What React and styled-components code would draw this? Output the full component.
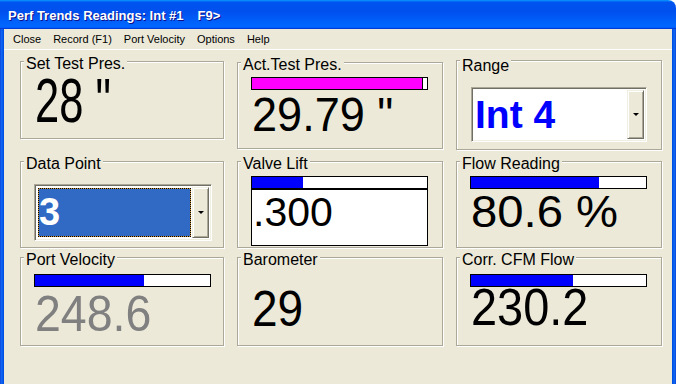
import React from 'react'
import styled, { createGlobalStyle } from 'styled-components'

const GlobalStyle = createGlobalStyle`
  html, body {
    margin: 0;
    padding: 0;
    background: #fff;
  }
  body {
    font-family: "Liberation Sans", Arial, sans-serif;
  }
`

const Window = styled.div`
  width: 676px;
  height: 384px;
  display: flex;
  flex-direction: column;
  overflow: hidden;
`

const TitleBar = styled.div`
  flex: none;
  height: 29px;
  box-sizing: border-box;
  display: flex;
  align-items: center;
  padding: 2px 0 0 8px;
  border-top-right-radius: 8px;
  background: linear-gradient(to bottom, #0997ff, #0053ee 8%, #0050ee 40%, #0066ff 88%, #0066ff 93%, #005bff 95%, #003dd7 96%, #003dd7);
  color: #fff;
  font: bold 13px "Liberation Sans", Arial, sans-serif;
  text-shadow: 1px 1px #0f1089;
  white-space: pre;
`

const TitleKey = styled.span`
  margin-left: 14px;
`

const Frame = styled.div`
  flex: 1;
  display: flex;
  padding: 0 4px;
  background: linear-gradient(to right, #0831d9 0, #166aee 1px, #0058ee 3px, #0046d8 4px, transparent 4px, transparent calc(100% - 4px), #0046d8 calc(100% - 4px), #0058ee calc(100% - 3px), #166aee calc(100% - 1px), #0831d9 100%);
`

const Client = styled.div`
  flex: 1;
  display: flex;
  flex-direction: column;
  background: #ece9d8;
`

const MenuBar = styled.div`
  flex: none;
  height: 20px;
  display: flex;
  align-items: center;
  padding-left: 3px;
  border-bottom: 1px solid #fff;
  font: 11px "Liberation Sans", Arial, sans-serif;
  color: #000;
`

const MenuItem = styled.span`
  padding: 0 6px;
`

const Panels = styled.div`
  display: grid;
  grid-template-columns: 204px 206px 206px;
  grid-template-rows: 101px 96px auto;
  column-gap: 13px;
  align-items: start;
  padding: 10px 0 0 16px;
`

const Group = styled.div`
  box-sizing: border-box;
  height: ${p => p.$h}px;
  margin-top: ${p => p.$top || 0}px;
  display: flex;
  flex-direction: column;
  align-items: flex-start;
  padding: 0 13px;
  border: 1px solid #aca899;
  box-shadow: inset 1px 1px #fff, 1px 1px #fff;
`

const Legend = styled.div`
  margin: ${p => p.$offset || -7}px 0 0 -10px;
  padding: 0 2px;
  background: #ece9d8;
  font-size: 16px;
  line-height: 18px;
  color: #000;
  white-space: nowrap;
`

const Bar = styled.div`
  flex: none;
  box-sizing: border-box;
  width: 177px;
  height: 13px;
  margin-top: ${p => p.$mt}px;
  border: 1px solid #000;
  background: #fff;
`

const Fill = styled.div`
  height: 100%;
  width: ${p => p.$pct}%;
  background: ${p => p.$color || '#0000ff'};
  border-right: ${p => (p.$edge ? '1px solid #000' : 'none')};
`

const Value = styled.div`
  margin: ${p => p.$mt}px 0 0 1px;
  font-size: ${p => p.$size}px;
  line-height: 0.8;
  color: ${p => p.$color || '#000'};
  white-space: pre;
  transform: scaleX(${p => p.$sx});
  transform-origin: left top;
`

const TextBox = styled.div`
  box-sizing: border-box;
  width: 177px;
  height: 57px;
  padding: 2px 0 0 1px;
  border: 1px solid #000;
  background: #fff;
  font-size: 41px;
  line-height: 1;
  color: #000;
`

const Combo = styled.div`
  box-sizing: border-box;
  width: ${p => p.$w}px;
  height: ${p => p.$h}px;
  margin: ${p => p.$mt}px 0 0 ${p => p.$ml || 0}px;
  display: flex;
  padding: 2px;
  border: 1px solid;
  border-color: #aca899 #fff #fff #aca899;
  box-shadow: inset 1px 1px #716f64, inset -1px -1px #f1efe2;
  background: #fff;
`

const ComboField = styled.div`
  flex: 1;
  display: flex;
  align-items: center;
  padding-left: 1px;
  font-weight: bold;
  font-size: 39px;
  color: #0000ff;
`

const Selection = styled.div`
  flex: 1;
  display: flex;
  align-items: center;
  margin: 1px;
  padding-left: 1px;
  background: #316ac5;
  box-shadow: inset 0 0 0 1px #ce953a;
  outline: 1px dotted #000;
  outline-offset: -1px;
  font-weight: bold;
  font-size: 38px;
  color: #fff;
`

const DropButton = styled.div`
  flex: none;
  box-sizing: border-box;
  width: 17px;
  display: flex;
  align-items: center;
  justify-content: center;
  background: #ece9d8;
  border: 1px solid;
  border-color: #f1efe2 #716f64 #716f64 #f1efe2;
  box-shadow: inset 1px 1px #fff, inset -1px -1px #aca899;
`

const Arrow = styled.div`
  width: 0;
  height: 0;
  border-left: 3px solid transparent;
  border-right: 3px solid transparent;
  border-top: 3px solid #000;
`

const menu = ['Close', 'Record (F1)', 'Port Velocity', 'Options', 'Help']

export default function App() {
  return (
    <>
      <GlobalStyle />
      <Window>
        <TitleBar>
          Perf Trends Readings: Int #1<TitleKey>F9&gt;</TitleKey>
        </TitleBar>
        <Frame>
          <Client>
            <MenuBar>
              {menu.map(m => (
                <MenuItem key={m}>{m}</MenuItem>
              ))}
            </MenuBar>
            <Panels>
              <Group $top={1} $h={78}>
                <Legend>Set Test Pres.</Legend>
                <Value $size={63} $sx={0.69} $mt={2}>28 "</Value>
              </Group>
              <Group $top={2} $h={87}>
                <Legend>Act.Test Pres.</Legend>
                <Bar $mt={3}>
                  <Fill $pct={97} $color="#ff00ff" $edge />
                </Bar>
                <Value $size={49} $sx={0.92} $mt={5}>29.79 "</Value>
              </Group>
              <Group $top={0} $h={90}>
                <Legend $offset={-4}>Range</Legend>
                <Combo $w={176} $h={55} $mt={12} $ml={1}>
                  <ComboField>Int 4</ComboField>
                  <DropButton>
                    <Arrow />
                  </DropButton>
                </Combo>
              </Group>

              <Group $h={87}>
                <Legend>Data Point</Legend>
                <Combo $w={178} $h={57} $mt={11}>
                  <Selection>3</Selection>
                  <DropButton>
                    <Arrow />
                  </DropButton>
                </Combo>
              </Group>
              <Group $h={87}>
                <Legend>Valve Lift</Legend>
                <Bar $mt={3}>
                  <Fill $pct={29} />
                </Bar>
                <TextBox>.300</TextBox>
              </Group>
              <Group $h={87}>
                <Legend>Flow Reading</Legend>
                <Bar $mt={3}>
                  <Fill $pct={73} />
                </Bar>
                <Value $size={45} $sx={1.05} $mt={5}>80.6 %</Value>
              </Group>

              <Group $h={89}>
                <Legend>Port Velocity</Legend>
                <Bar $mt={5}>
                  <Fill $pct={62} />
                </Bar>
                <Value $size={50} $sx={0.93} $mt={7} $color="#808080">248.6</Value>
              </Group>
              <Group $h={89}>
                <Legend>Barometer</Legend>
                <Value $size={50} $sx={0.92} $mt={20}>29</Value>
              </Group>
              <Group $h={89}>
                <Legend>Corr. CFM Flow</Legend>
                <Bar $mt={5}>
                  <Fill $pct={58} />
                </Bar>
                <Value $size={51} $sx={0.92} $mt={1}>230.2</Value>
              </Group>
            </Panels>
          </Client>
        </Frame>
      </Window>
    </>
  )
}
